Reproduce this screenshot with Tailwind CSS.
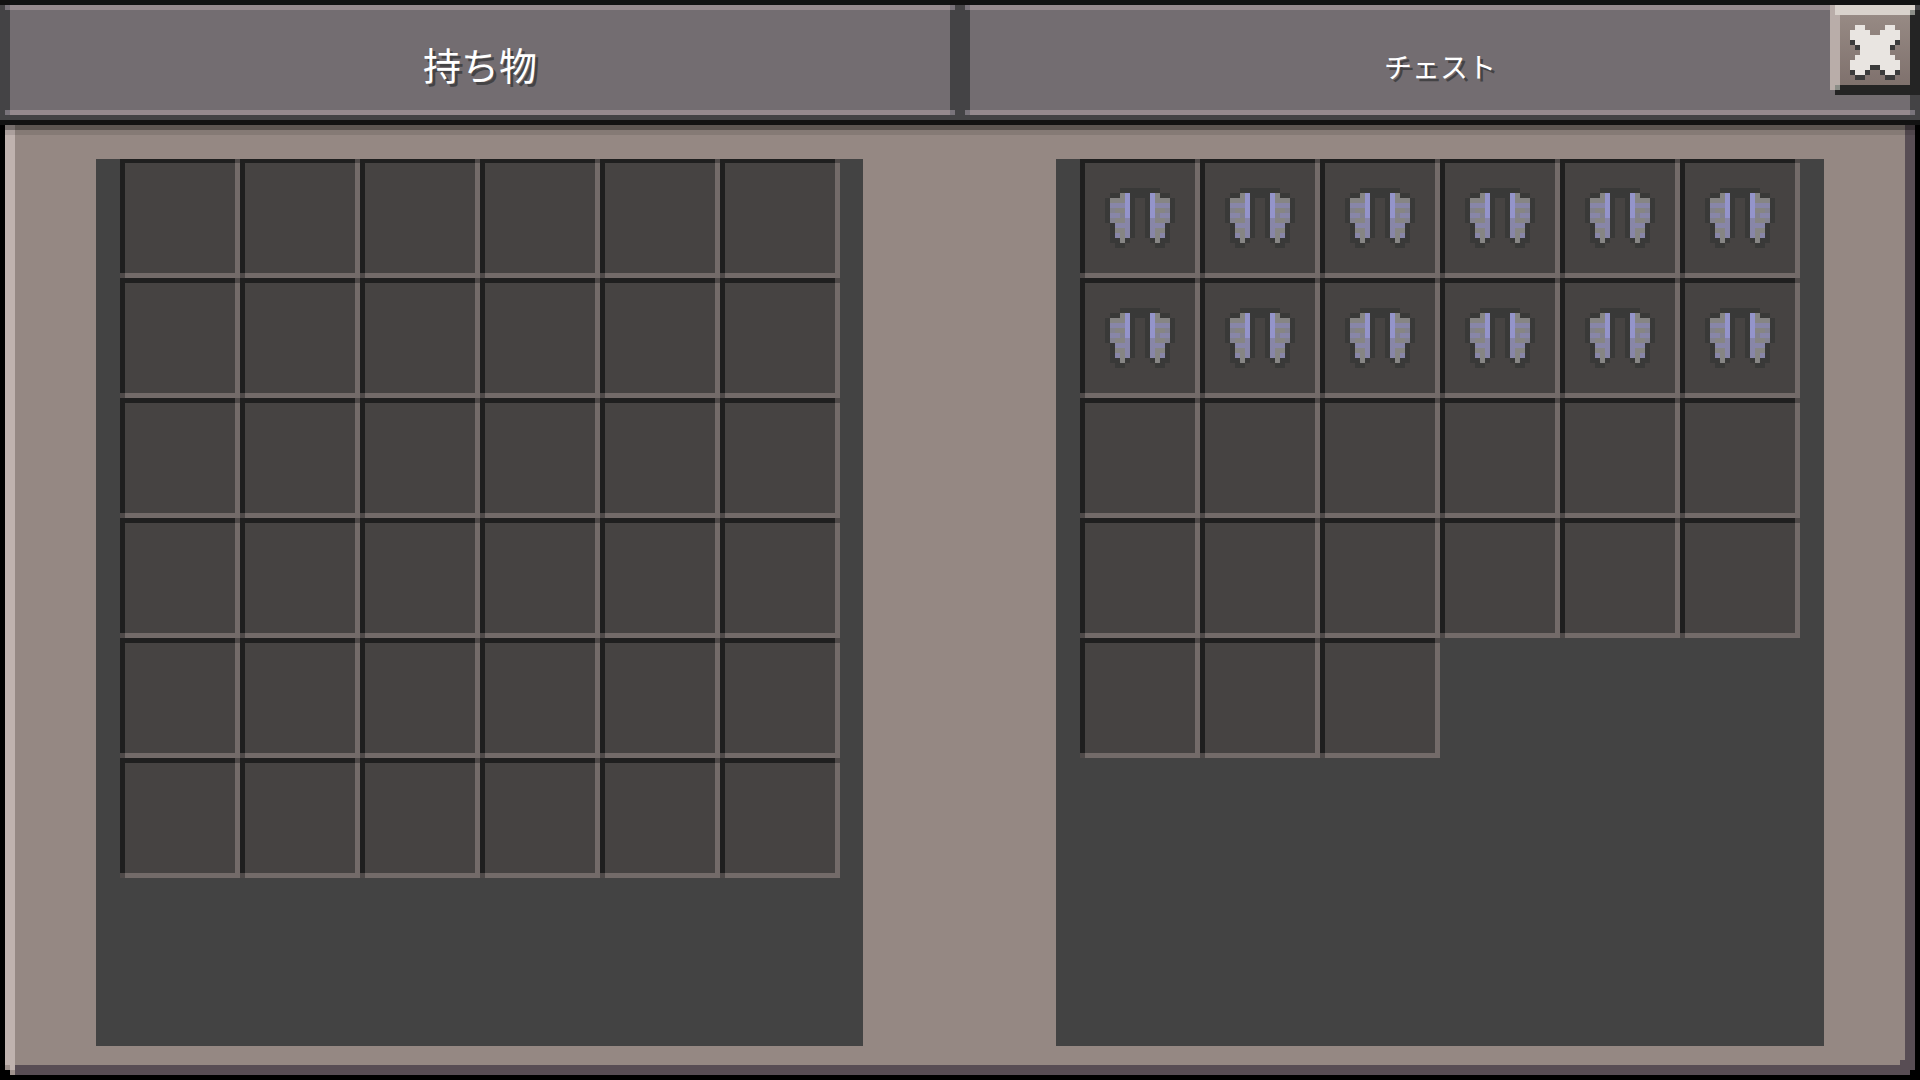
<!DOCTYPE html>
<html lang="ja">
<head>
  <meta charset="UTF-8">
  <meta name="viewport" content="width=device-width, initial-scale=1.0">
  <title>チェスト</title>
  <script src="https://cdn.jsdelivr.net/npm/@tailwindcss/browser@4"></script>
  <style>
    body {
      font-family: 'Noto Sans CJK JP', sans-serif;
    }
  </style>
</head>
<body class="bg-black h-screen flex flex-col overflow-hidden">
  <header class="relative border-y-5 border-[#121212] bg-[#444345] pb-[5px]">
    <nav class="grid grid-cols-2">
      <button type="button" class="px-[5px] flex flex-col items-stretch">
        <span class="h-[5px] bg-[#968a8e] border-x-5 border-[#79737a]"></span>
        <span class="h-[100px] mx-[5px] bg-[#736d71] flex items-center justify-center pt-2 text-white text-[38px] leading-[38px] [text-shadow:3px_3px_0_#444345]">持ち物</span>
        <span class="h-[5px] bg-[#968a8e] border-x-5 border-[#79737a]"></span>
      </button>
      <button type="button" class="px-[5px] flex flex-col items-stretch">
        <span class="h-[5px] bg-[#968a8e] border-x-5 border-[#79737a]"></span>
        <span class="h-[100px] mx-[5px] bg-[#736d71] flex items-center justify-center pt-3 text-white text-[28px] leading-[38px] [text-shadow:3px_3px_0_#444345]">チェスト</span>
        <span class="h-[5px] bg-[#968a8e] border-x-5 border-[#79737a]"></span>
      </button>
    </nav>
    <button type="button" aria-label="閉じる" class="absolute top-0 right-0 size-[90px]">
      <svg viewBox="0 0 18 18" class="size-full" shape-rendering="crispEdges">
        <defs>
          <linearGradient id="face" x1="0" y1="0" x2="0" y2="1">
            <stop offset="0" stop-color="#978a84"/>
            <stop offset="1" stop-color="#7f716d"/>
          </linearGradient>
        </defs>
        <path fill="#242424" d="M16 2h2v16H1v-2h15z"/>
        <path fill="url(#face)" d="M2 2h14v14H2z"/>
        <path fill="#b9ada9" d="M0 0h2v17H0z"/>
        <path fill="#d9d2cc" d="M1 0h16v2H1z"/>
        <path fill="#8b8d87" d="M16 1h1v1h-1zM1 16h1v1H1z"/>
        <path fill="#242424" d="M17 1h1v1h-1z"/>
        <!-- cross: shadow first, then the light face -->
        <path fill="#3b3b3b" d="M4 7h10v1H4zM5 8h8v1H5zM8 12h2v1H8zM4 13h4v1H4zM10 13h4v1h-4zM5 14h2v1H5zM11 14h2v1h-2z"/>
        <path fill="#e9e5e1" d="M5 4h2v1h1v1h2V5h1V4h2v1h1v2h-1v1h-1v2h1v1h1v2h-1v1h-2v-1h-1v-1H8v1H7v1H5v-1H4v-2h1v-1h1V8H5V7H4V5h1z"/>
      </svg>
    </button>
  </header>

  <main class="relative flex-1 min-h-0 mx-[5px] mb-[5px] border-x-10 border-b-10 border-l-[#bfb2ae] border-r-[#584d54] border-b-[#584d54] bg-[#958883] grid grid-cols-2 pt-[34px] pb-[19px]">
    <!-- shade cast by the header -->
    <div class="absolute top-0 -inset-x-[10px] h-[10px] bg-black/10 border-t-5 border-black/30"></div>
    <!-- stepped frame corners -->
    <svg viewBox="0 0 2 2" class="absolute -bottom-[10px] -left-[10px] size-[10px]" shape-rendering="crispEdges">
      <path fill="#000" d="M0 0h2v2H0z"/>
      <path fill="#a0938e" d="M0 0h1v1H0zM1 1h1v1H1z"/>
      <path fill="#bfb2ae" d="M1 0h1v1H1z"/>
    </svg>
    <svg viewBox="0 0 3 3" class="absolute -bottom-[10px] -right-[10px] size-[15px]" shape-rendering="crispEdges">
      <path fill="#584d54" d="M0 0h3v3H0z"/>
      <path fill="#000" d="M2 2h1v1H2z"/>
    </svg>
    <section aria-label="持ち物" class="ml-[81px] mr-[97px] bg-[#434343] overflow-hidden">
      <div id="inventory" class="-mt-px ml-6 grid grid-cols-[repeat(6,120px)]"></div>
    </section>
    <section aria-label="チェスト" class="ml-24 mr-[81px] bg-[#434343] overflow-hidden">
      <div id="chest" class="-mt-px ml-6 grid grid-cols-[repeat(6,120px)]"></div>
    </section>
  </main>

  <svg class="hidden">
    <defs>
      <g id="wing">
        <path fill="#393938" d="M4 2h4v2H7v8H6v1H5v1H3v-1H2V9H1V4h1V3h2z"/>
        <path fill="#8886a8" d="M4 3h2v9H5v1H4v-1H3V9H2V4h2z"/>
        <path fill="#868584" d="M4 3h1v2H2V4h2zM3 6h2v1H3zM3 8h2v1H3zM3 10h2v1H3zM4 11h1v2H4z"/>
        <path fill="#838290" d="M2 6h1v1H2zM2 8h1v1H2zM4 7h1v1H4z"/>
        <path fill="#9494cb" d="M5 3h1v5H5z"/>
      </g>
      <g id="elytra">
        <use href="#wing"/>
        <use href="#wing" transform="matrix(-1 0 0 1 16 0)"/>
      </g>
    </defs>
  </svg>

  <script>
    const inventory = { id: 'inventory', size: 36, items: 0 };
    const chest = { id: 'chest', size: 27, items: 12 };

    [inventory, chest].forEach(box => {
      const grid = document.getElementById(box.id);
      for (let i = 0; i < box.size; i++) {
        const slot = document.createElement('button');
        slot.type = 'button';
        slot.setAttribute('aria-label', 'スロット ' + (i + 1));
        // before / after cover the two corners where dark and light edges meet
        slot.className = "relative h-[120px] flex items-center justify-center bg-[#464342] border-5 border-t-[#1f1f1f] border-l-[#1f1f1f] border-r-[#736b69] border-b-[#736b69] before:absolute before:-top-[5px] before:-right-[5px] before:size-[5px] before:bg-[#4f4a49] after:absolute after:-bottom-[5px] after:-left-[5px] after:size-[5px] after:bg-[#4f4a49]";
        if (i < box.items) {
          slot.innerHTML = '<svg viewBox="0 0 16 16" class="size-20" shape-rendering="crispEdges"><use href="#elytra"/></svg>';
        }
        grid.appendChild(slot);
      }
    });
  </script>
</body>
</html>
